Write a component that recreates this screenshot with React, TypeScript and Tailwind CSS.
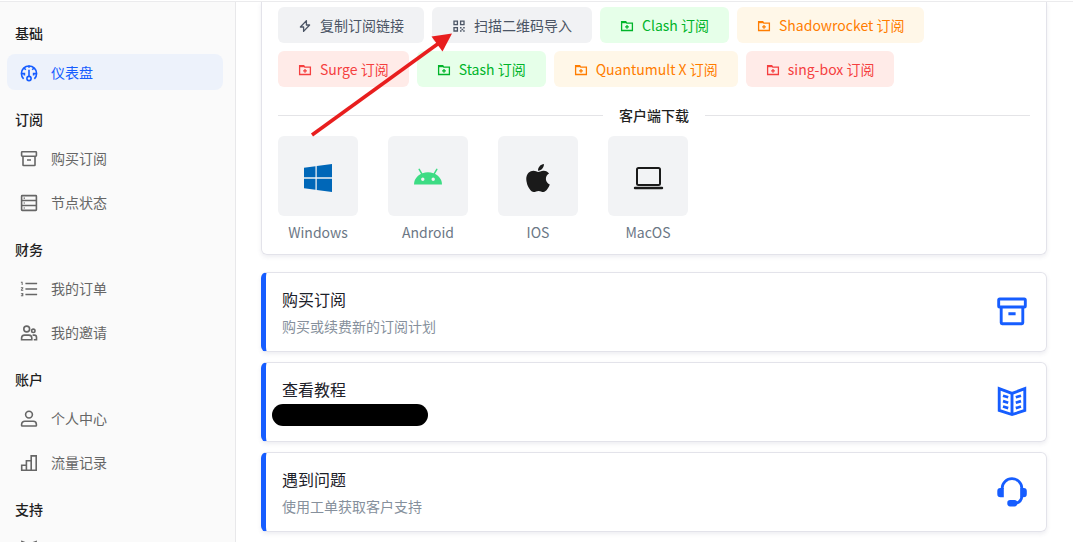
import type { ReactNode } from "react";
import { AiOutlineOrderedList } from "react-icons/ai";
import { FaApple, FaWindows } from "react-icons/fa";

type IconProps = { className?: string };

function Icon({ className = "size-5", children }: IconProps & { children: ReactNode }) {
  return (
    <svg
      viewBox="0 0 20 20"
      className={`shrink-0 ${className}`}
      fill="none"
      stroke="currentColor"
      strokeWidth="1.6"
      aria-hidden="true"
    >
      {children}
    </svg>
  );
}

const GaugeIcon = (p: IconProps) => (
  <Icon {...p}>
    <path d="M4.6 15.9A7.6 7.6 0 1 1 15.4 15.9" />
    <path d="M10 6.8v6.4" />
    <circle cx="10" cy="15.5" r="2.1" />
    <path d="M10 2.5v2.2M5 5l1.8 1.8M15 5l-1.8 1.8M2.4 10.6h3v2M17.6 10.6h-3v2" />
  </Icon>
);

const ArchiveIcon = (p: IconProps) => (
  <Icon {...p}>
    <rect x="2.6" y="2.8" width="14.8" height="4.4" rx="0.6" />
    <path d="M4 7.2v8.8a.5.5 0 0 0 .5.5h11a.5.5 0 0 0 .5-.5V7.2M8 11h4" />
  </Icon>
);

const ServerIcon = (p: IconProps) => (
  <Icon {...p}>
    <rect x="2.6" y="2.6" width="14.8" height="14.8" rx="0.6" />
    <path d="M2.6 7.5h14.8M2.6 12.5h14.8" />
    <path d="M4.6 5.1h1.4M4.6 10h1.4M4.6 15h1.4" strokeWidth="1.2" />
  </Icon>
);

const UsersIcon = (p: IconProps) => (
  <Icon {...p}>
    <circle cx="7.7" cy="6" r="2.9" />
    <path d="M2.6 16.8v-1.7a3 3 0 0 1 3-3h4.2a3 3 0 0 1 3 3v1.7z" />
    <circle cx="14.3" cy="7.8" r="1.7" />
    <path d="M13.6 12.1h1.7a2.2 2.2 0 0 1 2.2 2.2v2.5h-2.7" />
  </Icon>
);

const UserIcon = (p: IconProps) => (
  <Icon {...p}>
    <circle cx="10" cy="5.6" r="3.4" />
    <path d="M2.6 15.4a3.2 3.2 0 0 1 3.2-3.2h8.4a3.2 3.2 0 0 1 3.2 3.2v1a.6.6 0 0 1-.6.6H3.2a.6.6 0 0 1-.6-.6z" />
  </Icon>
);

const BarsIcon = (p: IconProps) => (
  <Icon {...p}>
    <path d="M2.7 12.3h4.7v5H2.7zM7.4 7.8h4.8v9.5H7.4zM12.2 2.9h5v14.4h-5z" />
  </Icon>
);

const BookIcon = (p: IconProps) => (
  <Icon {...p}>
    <path d="M2.9 2.6 10 5.2l7.1-2.6v12.1L10 17l-7.1-2.3zM10 5.2V17" />
    <path
      d="M5 6.5l2.9.9M5 9.5l2.9.9M5 12.5l2.9.9M15 6.5l-2.9.9M15 9.5l-2.9.9M15 12.5l-2.9.9"
      strokeWidth="1.5"
    />
  </Icon>
);

const HeadsetIcon = ({ className = "" }: IconProps) => (
  <svg viewBox="0 0 36 36" className={`shrink-0 ${className}`} fill="none" aria-hidden="true">
    <path d="M8.2 15v-1a9.8 9.3 0 0 1 19.6 0v8q0 5.6-6 7.4" stroke="currentColor" strokeWidth="2.8" />
    <path
      d="M9.8 14H6.3Q3.3 14.2 3.3 17v3q0 3.2 3.2 3.2h3.3zM26.4 14h3.3q3.1.2 3.1 3v3q0 3.2-3.1 3.2h-3.3z"
      fill="currentColor"
    />
    <rect x="13.3" y="26" width="10" height="6.4" rx="2.8" fill="currentColor" />
  </svg>
);

const LaptopIcon = ({ className = "" }: IconProps) => (
  <svg viewBox="0 0 32 32" className={className} fill="none" stroke="currentColor" aria-hidden="true">
    <rect x="5" y="6" width="23" height="17" rx="1.5" strokeWidth="2" />
    <path d="M3 26h27" strokeWidth="2.4" strokeLinecap="round" />
  </svg>
);

const AndroidIcon = ({ className = "" }: IconProps) => (
  <svg viewBox="0 0 28 28" className={className} aria-hidden="true">
    <path d="M5.2 5.4 8 10.2M22.8 5.4 20 10.2" stroke="currentColor" strokeWidth="1.5" strokeLinecap="round" />
    <path
      fillRule="evenodd"
      fill="currentColor"
      d="M0 20.6a14 12.4 0 0 1 28 0zM8.8 13.6a1.7 1.7 0 1 0 0 3.4 1.7 1.7 0 0 0 0-3.4zM19.2 13.6a1.7 1.7 0 1 0 0 3.4 1.7 1.7 0 0 0 0-3.4z"
    />
  </svg>
);

function SmallIcon({ children }: { children: ReactNode }) {
  return (
    <svg
      viewBox="0 0 14 14"
      className="size-3.5 shrink-0"
      fill="none"
      stroke="currentColor"
      strokeWidth="1.3"
      aria-hidden="true"
    >
      {children}
    </svg>
  );
}

const FolderAddIcon = () => (
  <SmallIcon>
    <path d="M1.6 11.5V2.6h4l1.2 1.6h5.6v7.3z" />
    <path d="M1.6 3.2h4.6" strokeWidth="2" />
    <path d="M7 6v3.8M5.1 7.9h3.8" />
  </SmallIcon>
);

const BoltIcon = () => (
  <SmallIcon>
    <path d="M8.4 1.6 2.4 8h3.2v4.4L11.6 6H8.4z" strokeLinejoin="round" />
  </SmallIcon>
);

const QrIcon = () => (
  <SmallIcon>
    <path d="M2 2.2h3.4v3.4H2zM8.6 2.2H12v3.4H8.6zM2 8.6h3.4V12H2z" />
    <path d="M8 8.7h1.5M11.2 8.7h1.5M9.5 10.4h1.7M8 12h1.5M11.2 12h1.5" strokeWidth="1.5" />
  </SmallIcon>
);

type NavItem = { label: string; icon: ReactNode; active?: boolean; iconOnly?: boolean };

const sections: { title: string; items: NavItem[] }[] = [
  { title: "基础", items: [{ label: "仪表盘", icon: <GaugeIcon />, active: true }] },
  {
    title: "订阅",
    items: [
      { label: "购买订阅", icon: <ArchiveIcon /> },
      { label: "节点状态", icon: <ServerIcon /> },
    ],
  },
  {
    title: "财务",
    items: [
      { label: "我的订单", icon: <AiOutlineOrderedList className="size-5 shrink-0" /> },
      { label: "我的邀请", icon: <UsersIcon /> },
    ],
  },
  {
    title: "账户",
    items: [
      { label: "个人中心", icon: <UserIcon /> },
      { label: "流量记录", icon: <BarsIcon /> },
    ],
  },
  { title: "支持", items: [{ label: "教程", icon: <BookIcon />, iconOnly: true }] },
];

const tones = {
  gray: "bg-[#f1f2f4] text-[#4b5565]",
  green: "bg-[#e6ffe9] text-[#00b42a]",
  orange: "bg-[#fff7e8] text-[#ff7d00]",
  red: "bg-[#ffebe8] text-[#f53f3f]",
};

const actions: { label: string; tone: keyof typeof tones; icon?: ReactNode }[] = [
  { label: "复制订阅链接", tone: "gray", icon: <BoltIcon /> },
  { label: "扫描二维码导入", tone: "gray", icon: <QrIcon /> },
  { label: "Clash 订阅", tone: "green" },
  { label: "Shadowrocket 订阅", tone: "orange" },
  { label: "Surge 订阅", tone: "red" },
  { label: "Stash 订阅", tone: "green" },
  { label: "Quantumult X 订阅", tone: "orange" },
  { label: "sing-box 订阅", tone: "red" },
];

const clients = [
  { label: "Windows", icon: <FaWindows className="size-8 text-[#0067b8]" /> },
  { label: "Android", icon: <AndroidIcon className="size-7 text-[#3ddc84]" /> },
  { label: "IOS", icon: <FaApple className="size-8 text-[#1a1a1a]" /> },
  { label: "MacOS", icon: <LaptopIcon className="size-8 text-[#1a1a1a]" /> },
];

const links: { title: string; text?: string; icon: ReactNode }[] = [
  { title: "购买订阅", text: "购买或续费新的订阅计划", icon: <ArchiveIcon className="size-9" /> },
  { title: "查看教程", icon: <BookIcon className="size-9" /> },
  { title: "遇到问题", text: "使用工单获取客户支持", icon: <HeadsetIcon className="size-9" /> },
];

function Sidebar() {
  return (
    <nav className="w-59 shrink-0 overflow-hidden border-r border-[#e8e8ea] bg-[#fafafa] pt-1.5 pr-3 pl-[7px]">
      {sections.map((section) => (
        <section key={section.title}>
          <h2 className="h-[42px] pt-3.5 pl-2 leading-[22px] font-medium text-[#1f1f1f]">
            {section.title}
          </h2>
          <ul>
            {section.items.map((item) => (
              <li key={item.label} className="py-1">
                <a
                  href="#"
                  aria-label={item.label}
                  className={`flex h-9 items-center gap-3 rounded-lg pl-3 ${
                    item.active ? "bg-[#edf2fb] text-[#165dff]" : "text-[#666666]"
                  }`}
                >
                  <span className="pt-0.5">{item.icon}</span>
                  {!item.iconOnly && <span>{item.label}</span>}
                </a>
              </li>
            ))}
          </ul>
        </section>
      ))}
    </nav>
  );
}

export default function App() {
  return (
    <div className="relative flex h-screen flex-col overflow-hidden bg-white font-['Noto_Sans_CJK_SC',sans-serif] text-sm">
      <header className="h-0.5 shrink-0 border-b border-[#ebebed]" />
      <div className="flex min-h-0 flex-1">
        <Sidebar />
        <main className="min-w-0 flex-1 overflow-hidden pr-6.5 pl-[25px]">
          <section className="rounded-b-md border border-t-0 border-[#e3e3ea] px-4 pt-[5px] pb-3 shadow-[0_2px_4px_rgba(80,80,120,0.1)]">
            <div className="flex flex-wrap gap-2">
              {actions.map((a) => (
                <button
                  key={a.label}
                  type="button"
                  className={`flex h-9 items-center gap-2 rounded-md px-5 whitespace-nowrap ${tones[a.tone]}`}
                >
                  <span className="pt-0.5">{a.icon ?? <FolderAddIcon />}</span>
                  {a.label}
                </button>
              ))}
            </div>
            <div className="mt-[18px] flex items-center gap-4">
              <div className="h-px flex-1 bg-[#e4e4e7]" />
              <h2 className="leading-5 font-medium text-[#1f1f1f]">客户端下载</h2>
              <div className="h-px flex-1 bg-[#e4e4e7]" />
            </div>
            <ul className="mt-[11px] flex flex-wrap gap-[30px]">
              {clients.map((c) => (
                <li key={c.label}>
                  <a href="#" className="flex flex-col items-center gap-1.5 text-[#6b7785]">
                    <span className="flex size-20 items-center justify-center rounded-md bg-[#f2f3f5] pt-1">
                      {c.icon}
                    </span>
                    <span className="leading-5">{c.label}</span>
                  </a>
                </li>
              ))}
            </ul>
          </section>

          <div className="mt-[17px] flex flex-col gap-2.5">
            {links.map((l) => (
              <a
                key={l.title}
                href="#"
                className="flex min-h-20 items-center justify-between rounded-md border border-l-[5px] border-[#e3e3ea] border-l-[#165dff] px-4 shadow-[0_2px_4px_rgba(80,80,120,0.1)]"
              >
                <div>
                  <h3 className="text-base leading-6 text-[#1d2129]">{l.title}</h3>
                  {l.text ? (
                    <p className="mt-1 leading-[22px] text-[#86909c]">{l.text}</p>
                  ) : (
                    <div className="mt-[3px] mb-px -ml-2.5 h-[22px] w-39 rounded-full bg-black" />
                  )}
                </div>
                <span className="text-[#165dff]">{l.icon}</span>
              </a>
            ))}
          </div>
        </main>
      </div>

      <svg
        viewBox="0 0 144 106"
        className="pointer-events-none absolute top-[31px] left-[310px] h-[106px] w-[144px]"
        aria-hidden="true"
      >
        <path d="M2 104 129 12" stroke="#e81e1e" strokeWidth="3.6" fill="none" />
        <path d="M142 2.5 121.5 5.5 132.5 20.5z" fill="#e81e1e" />
      </svg>
    </div>
  );
}
